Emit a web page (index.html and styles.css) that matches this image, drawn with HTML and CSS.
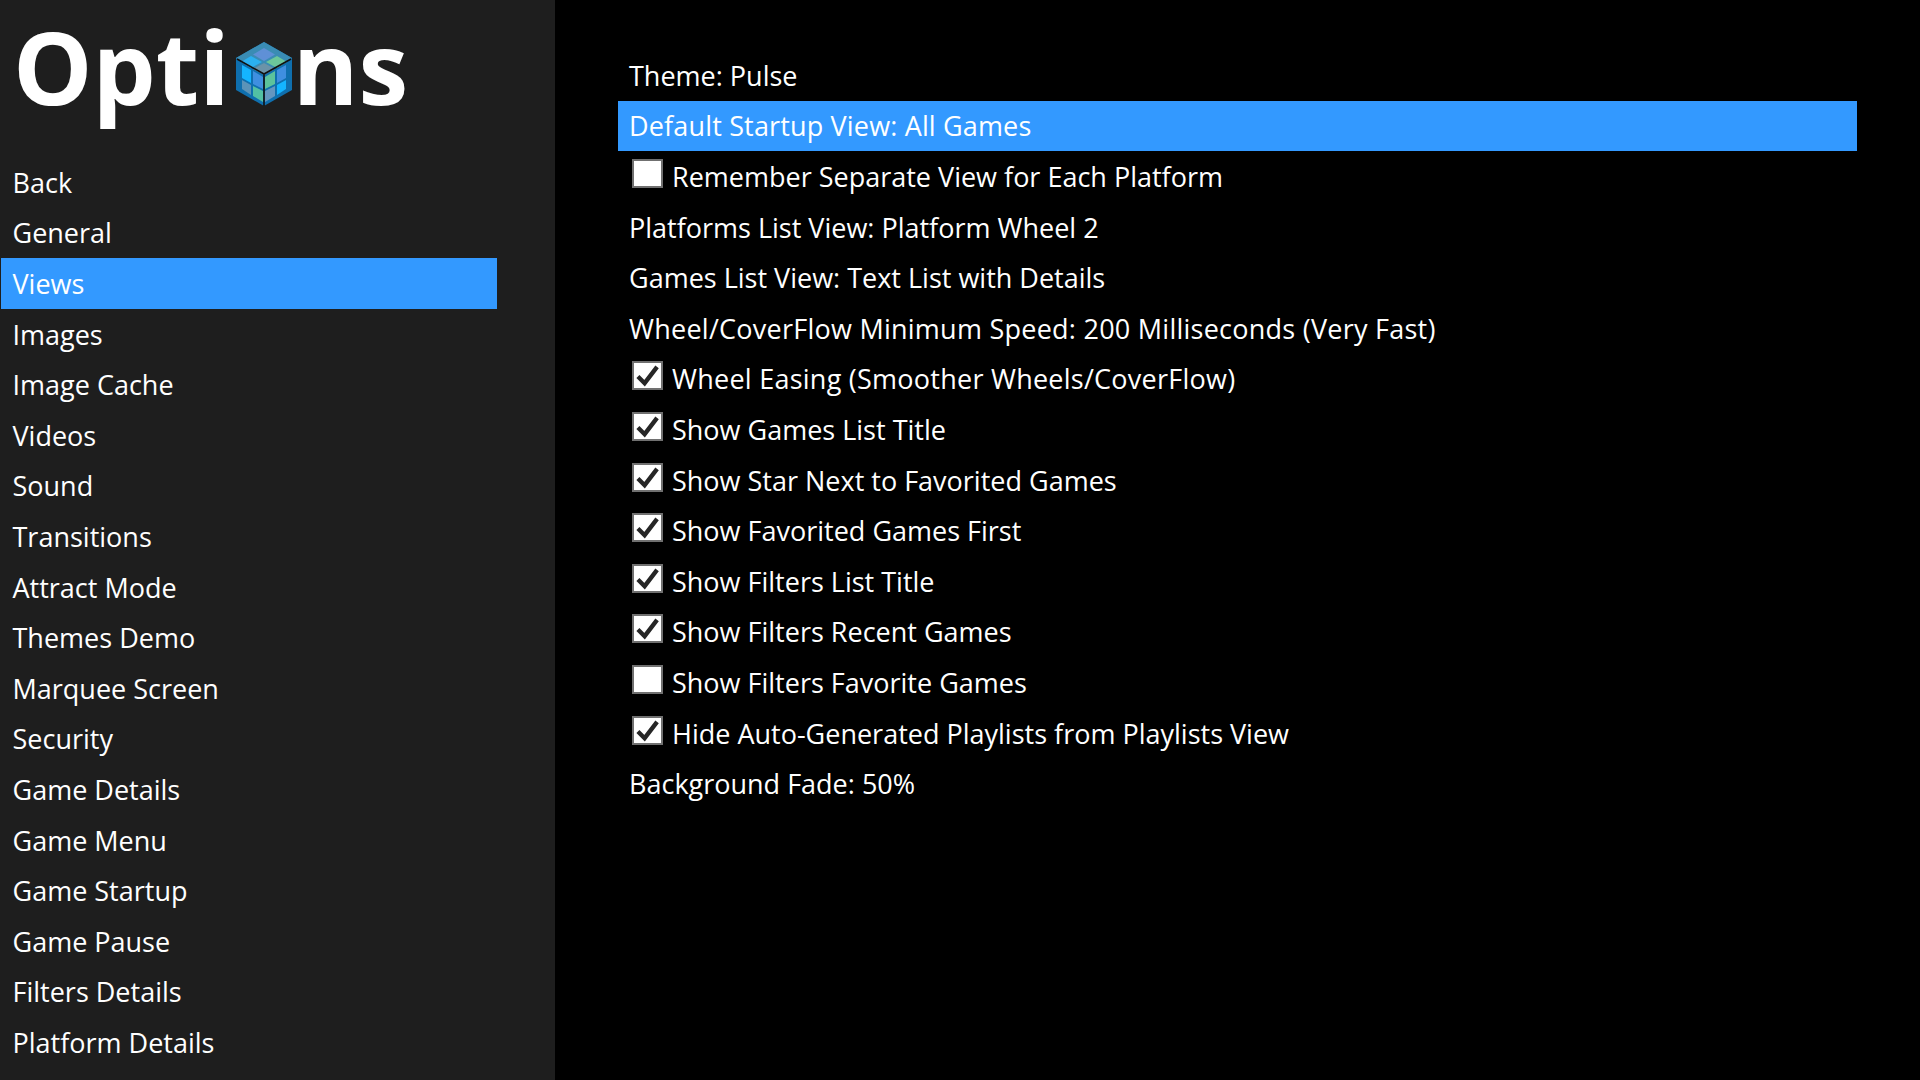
FILE: index.html
```html
<!DOCTYPE html>
<html lang="en">
<head>
<meta charset="utf-8">
<title>Options</title>
<link rel="stylesheet" href="styles.css">
</head>
<body>
<div class="app">
  <aside class="sidebar">
    <h1 class="title"><span>Opti</span><svg class="cube" viewBox="0 0 56 64" aria-hidden="true">
      <polygon points="28,0 56,16 56,48 28,64 0,48 0,16" fill="#0f6fae"/>
      <polygon points="28,0 56,16 28,32 0,16" fill="#3a8cb4"/>
      <polygon points="28,6 39,12.5 28,19 17,12.5" fill="#5f90d6"/>
      <polygon points="15,14 26,20 15,26 5,20" fill="#2bb0f0"/>
      <polygon points="41,14 51,20 41,26 30,20" fill="#6cc79a"/>
      <polygon points="28,21 39,27 28,33 17,27" fill="#6b93a8"/>
      <polygon points="6,23 15,28 15,41 6,36" fill="#14b4ff"/>
      <polygon points="17,29 27,35 27,47 17,42" fill="#3f8fe0"/>
      <polygon points="6,38 15,43 15,53 6,47" fill="#5b93b8"/>
      <polygon points="17,44 27,49 27,60 17,54" fill="#52c0a4"/>
      <polygon points="29,35 39,29 39,42 29,47" fill="#5cc29c"/>
      <polygon points="41,28 50,23 50,36 41,41" fill="#3f8fe0"/>
      <polygon points="29,49 39,44 39,54 29,60" fill="#6496c0"/>
      <polygon points="41,43 50,38 50,47 41,53" fill="#14b4ff"/>
      <path d="M1 17 L28 32 L55 17 M28 32 V64" fill="none" stroke="#111" stroke-width="1.6"/>
    </svg><span>ns</span></h1>
    <nav class="menu">
      <div class="row">Back</div>
      <div class="row">General</div>
      <div class="row active">Views</div>
      <div class="row">Images</div>
      <div class="row">Image Cache</div>
      <div class="row">Videos</div>
      <div class="row">Sound</div>
      <div class="row">Transitions</div>
      <div class="row">Attract Mode</div>
      <div class="row">Themes Demo</div>
      <div class="row">Marquee Screen</div>
      <div class="row">Security</div>
      <div class="row">Game Details</div>
      <div class="row">Game Menu</div>
      <div class="row">Game Startup</div>
      <div class="row">Game Pause</div>
      <div class="row">Filters Details</div>
      <div class="row">Platform Details</div>
    </nav>
  </aside>
  <main class="content">
    <div class="list">
      <div class="row item">Theme: Pulse</div>
      <div class="row item active slight">Default Startup View: All Games</div>
      <div class="row item"><span class="box"></span>Remember Separate View for Each Platform</div>
      <div class="row item">Platforms List View: Platform Wheel 2</div>
      <div class="row item">Games List View: Text List with Details</div>
      <div class="row item wide">Wheel/CoverFlow Minimum Speed: 200 Milliseconds (Very Fast)</div>
      <div class="row item wide"><span class="box"><svg class="tick" viewBox="0 0 24 24"><path d="M2 13 L9 20 L22 3"/></svg></span>Wheel Easing (Smoother Wheels/CoverFlow)</div>
      <div class="row item"><span class="box"><svg class="tick" viewBox="0 0 24 24"><path d="M2 13 L9 20 L22 3"/></svg></span>Show Games List Title</div>
      <div class="row item"><span class="box"><svg class="tick" viewBox="0 0 24 24"><path d="M2 13 L9 20 L22 3"/></svg></span>Show Star Next to Favorited Games</div>
      <div class="row item"><span class="box"><svg class="tick" viewBox="0 0 24 24"><path d="M2 13 L9 20 L22 3"/></svg></span>Show Favorited Games First</div>
      <div class="row item"><span class="box"><svg class="tick" viewBox="0 0 24 24"><path d="M2 13 L9 20 L22 3"/></svg></span>Show Filters List Title</div>
      <div class="row item"><span class="box"><svg class="tick" viewBox="0 0 24 24"><path d="M2 13 L9 20 L22 3"/></svg></span>Show Filters Recent Games</div>
      <div class="row item"><span class="box"></span>Show Filters Favorite Games</div>
      <div class="row item"><span class="box"><svg class="tick" viewBox="0 0 24 24"><path d="M2 13 L9 20 L22 3"/></svg></span>Hide Auto-Generated Playlists from Playlists View</div>
      <div class="row item">Background Fade: 50%</div>
    </div>
  </main>
</div>
</body>
</html>
```
FILE: styles.css
```css
* { box-sizing: border-box; }
html, body { margin: 0; height: 100%; background: #000; overflow: hidden; }
body { font-family: "Open Sans", "Noto Sans", sans-serif; color: #fff; }
.app { display: flex; height: 1080px; }
.sidebar { width: 555px; flex: none; background: #1e1e1e; padding-left: 1px; }
.title { display: flex; align-items: center; height: 157px; margin: 0; padding: 0 0 26px 12px; font-size: 100px; font-weight: 700; line-height: 1; letter-spacing: 0; }
.cube { width: 56px; height: 64px; margin: 17px 1px 0 6px; flex: none; }
.menu { width: 496px; }
.row { height: 50.6px; display: flex; align-items: center; padding-left: 11.5px; font-size: 27px; white-space: nowrap; }
.active { background: #3399ff; }
.content { flex: 1; padding: 50px 63px 0; }
.item { padding-left: 11px; }
.wide { letter-spacing: 0.25px; }
.slight { letter-spacing: 0.16px; }
.box { width: 31px; height: 29px; flex: none; margin: -6px 9px 0 3px; background: #fff; border: 2px solid #707070; display: flex; align-items: center; justify-content: center; }
.tick { width: 25px; height: 23px; }
.tick path { fill: none; stroke: #262626; stroke-width: 4.5; }
```
